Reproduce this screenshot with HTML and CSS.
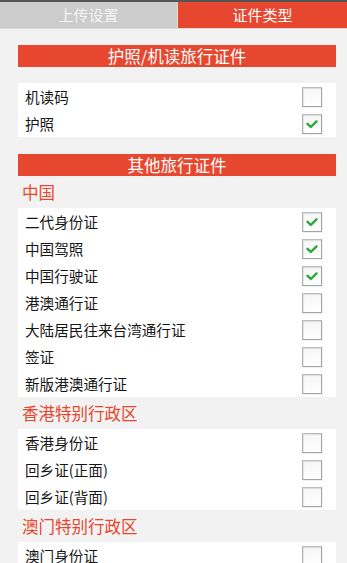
FILE: index.html
```html
<!DOCTYPE html>
<html lang="zh">
<head>
<meta charset="utf-8">
<link rel="stylesheet" href="styles.css">
</head>
<body>
<div class="topbar"></div>
<div class="tabs">
  <div class="tab">上传设置</div>
  <div class="tab active">证件类型</div>
</div>
<div class="content">
  <div class="header first">护照/机读旅行证件</div>
  <div class="list">
    <div class="row"><span>机读码</span><span class="box"></span></div>
    <div class="row"><span>护照</span><span class="box on"><svg viewBox="0 0 20 20"><path d="M5 9.8 L8.7 13.3 L15 7"/></svg></span></div>
  </div>
  <div class="header">其他旅行证件</div>
  <div class="label">中国</div>
  <div class="list">
    <div class="row"><span>二代身份证</span><span class="box on"><svg viewBox="0 0 20 20"><path d="M5 9.8 L8.7 13.3 L15 7"/></svg></span></div>
    <div class="row"><span>中国驾照</span><span class="box on"><svg viewBox="0 0 20 20"><path d="M5 9.8 L8.7 13.3 L15 7"/></svg></span></div>
    <div class="row"><span>中国行驶证</span><span class="box on"><svg viewBox="0 0 20 20"><path d="M5 9.8 L8.7 13.3 L15 7"/></svg></span></div>
    <div class="row"><span>港澳通行证</span><span class="box"></span></div>
    <div class="row"><span>大陆居民往来台湾通行证</span><span class="box"></span></div>
    <div class="row"><span>签证</span><span class="box"></span></div>
    <div class="row"><span>新版港澳通行证</span><span class="box"></span></div>
  </div>
  <div class="label">香港特别行政区</div>
  <div class="list">
    <div class="row"><span>香港身份证</span><span class="box"></span></div>
    <div class="row"><span>回乡证(正面)</span><span class="box"></span></div>
    <div class="row"><span>回乡证(背面)</span><span class="box"></span></div>
  </div>
  <div class="label">澳门特别行政区</div>
  <div class="list">
    <div class="row"><span>澳门身份证</span><span class="box"></span></div>
  </div>
</div>
</body>
</html>
```
FILE: styles.css
```css
html, body {
  margin: 0;
  padding: 0;
  background: #f2f2f2;
  font-family: "Noto Sans CJK SC", "Noto Sans", sans-serif;
  overflow: hidden;
  height: 563px;
}
.topbar {
  height: 2px;
  background: #555;
}
.tabs {
  display: flex;
  height: 26px;
  border-bottom: 1px solid #e2dcd6;
}
.tab {
  width: 177px;
  background: #cccccc;
  color: #f4f4f4;
  font-size: 15px;
  line-height: 26px;
  text-align: center;
  border-right: 1px solid #e8dccf;
}
.tab.active {
  flex: 1;
  background: #e8472f;
  color: #ffffff;
  border-right: 0;
}
.content {
  width: 318px;
  margin-left: 18px;
  padding-top: 16px;
}
.header {
  height: 22px;
  line-height: 22px;
  background: #e8472f;
  color: #fff;
  font-size: 16.5px;
  text-align: center;
  margin-top: 17px;
  margin-bottom: 0;
}
.header.first {
  margin-top: 0;
  margin-bottom: 16px;
}
.label {
  color: #e8472f;
  font-size: 16.5px;
  height: 32px;
  line-height: 32px;
  padding-left: 4px;
}
.list {
  background: #fff;
}
.row {
  height: 27px;
  display: flex;
  align-items: center;
  justify-content: space-between;
  padding: 0 14px 0 7px;
  font-size: 14.6px;
  color: #161616;
}
.box {
  width: 18px;
  height: 18px;
  border: 1px solid #a4a4a4;
  border-top-color: #bcbcbc;
  border-left-color: #b4b4b4;
  background: linear-gradient(#f6f6f6, #ffffff);
  box-shadow: inset 1px 1px 1px rgba(0,0,0,0.1), 1px 1px 0 rgba(0,0,0,0.06);
  display: flex;
  align-items: center;
  justify-content: center;
}
.box svg {
  width: 18px;
  height: 18px;
}
.box path {
  fill: none;
  stroke: #26a83a;
  stroke-width: 2.6;
  stroke-linecap: round;
  stroke-linejoin: round;
}
```
